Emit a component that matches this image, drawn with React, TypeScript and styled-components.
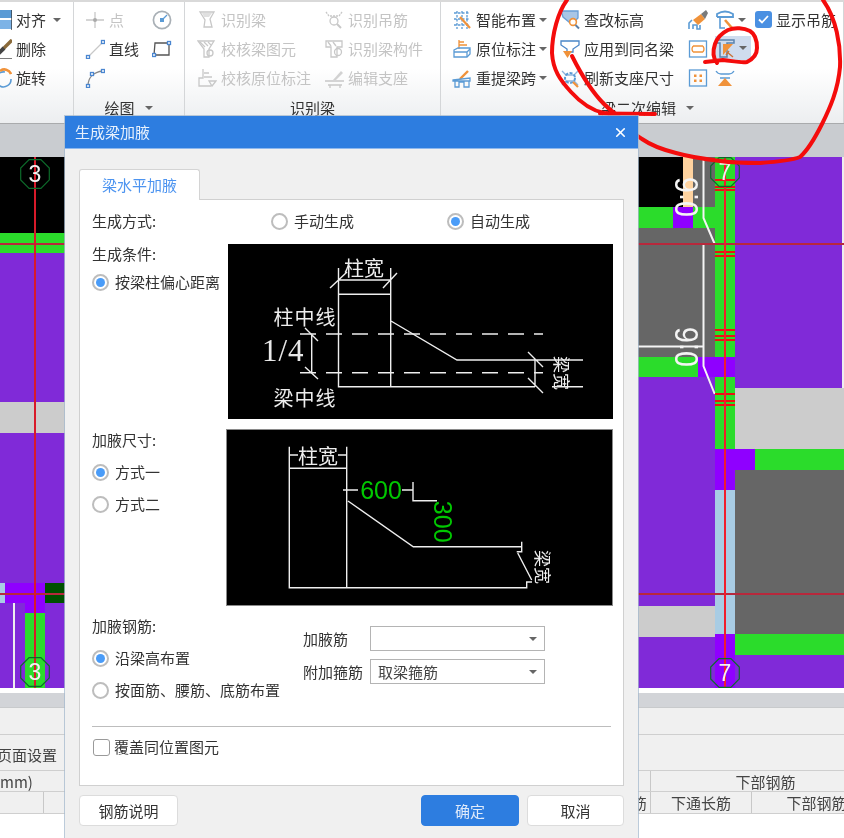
import React from "react";
import styled, { createGlobalStyle } from "styled-components";
import { X } from "lucide-react";

const BLUE = "#5b9bd5";
const ORANGE = "#f0923a";
const GRAY = "#c8c8c8";
const PURPLE = "#802ad8";
const BRIGHT = "#8f00ff";
const GREEN = "#2bdc2b";
const DARK = "#666666";
const LIGHT = "#cccccc";
const SKY = "#a8cce4";

const Global = createGlobalStyle`
  html, body { margin: 0; padding: 0; background: #fff; }
  #root { width: 844px; height: 838px; overflow: hidden; }
  * { box-sizing: border-box; }
`;

const Page = styled.div`
  position: relative;
  width: 844px;
  height: 838px;
  overflow: hidden;
  background: #fff;
  color: #333;
  font: 15px/22px "Noto Sans CJK SC", "Liberation Sans", sans-serif;
  filter: blur(0.35px);
`;

/* ---------- ribbon ---------- */
const Ribbon = styled.div`
  display: flex;
  height: 124px;
  border-top: 2px solid #d9d9d9;
  border-bottom: 1px solid #a9abad;
  background: linear-gradient(#ffffff 55%, #eceef0);
`;
const Group = styled.div<{ $w: number; $pl: number; $ml?: number }>`
  flex: none;
  width: ${(p) => p.$w}px;
  margin-left: ${(p) => p.$ml ?? 0}px;
  padding: 3px 0 0 ${(p) => p.$pl}px;
  border-right: 1px solid #d4d6d8;
  display: flex;
  flex-direction: column;
`;
const ToolGrid = styled.div<{ $cols: string }>`
  display: grid;
  grid-template-columns: ${(p) => p.$cols};
  grid-auto-rows: 29px;
  height: 87px;
`;
const Tool = styled.div<{ $off?: boolean; $hot?: boolean }>`
  display: flex;
  align-items: center;
  gap: 4px;
  white-space: nowrap;
  color: ${(p) => (p.$off ? "#c4c4c4" : "#333")};
  svg { flex: none; }
`;
const HotTool = styled.div`
  display: flex;
  align-items: center;
  gap: 3px;
  width: 36px;
  height: 24px;
  margin-top: 2px;
  background: #cfdcee;
`;
const Caret = styled.i<{ $gap?: number }>`
  flex: none;
  width: 0;
  height: 0;
  margin-left: ${(p) => p.$gap ?? 2}px;
  border: 4px solid transparent;
  border-top: 4px solid #666;
  border-bottom: 0;
`;
const GroupLabel = styled.div<{ $shift?: number }>`
  display: flex;
  justify-content: center;
  align-items: center;
  gap: 8px;
  height: 22px;
  margin-top: 5px;
  margin-left: ${(p) => p.$shift ?? 0}px;
  margin-right: 12px;
`;
const Check = styled.span`
  flex: none;
  width: 17px;
  height: 17px;
  border-radius: 3px;
  background: #4a90e2;
  display: flex;
  align-items: center;
  justify-content: center;
`;

/* ---------- canvas ---------- */
const GrayStrip = styled.div`
  height: 33px;
  background: #c9ccd0;
`;
const Canvas = styled.svg`
  display: block;
  width: 844px;
  height: 531px;
`;
const Annotation = styled.svg`
  position: absolute;
  left: 0;
  top: 0;
  width: 844px;
  height: 200px;
  pointer-events: none;
`;

/* ---------- bottom panels ---------- */
const BottomGap = styled.div`
  height: 5px;
  background: #fff;
`;
const BottomBar = styled.div`
  height: 15px;
  background: #d2d4d8;
  border-bottom: 1px solid #c8cacc;
`;
const BottomRow = styled.div<{ $h: number }>`
  height: ${(p) => p.$h}px;
  background: #f0f0f0;
  border-bottom: 1px solid #cfcfcf;
  display: flex;
  align-items: center;
  padding-top: 4px;
  color: #444;
`;
const PageSetup = styled.span`
  margin-left: -3px;
`;
const TableRow = styled.div<{ $cols: string; $h: number }>`
  display: grid;
  grid-template-columns: ${(p) => p.$cols};
  height: ${(p) => p.$h}px;
  background: #f0f0f0;
  border-bottom: 1px solid #cfcfcf;
  color: #444;
`;
const Cell = styled.div<{ $end?: boolean; $start?: boolean }>`
  border-right: 1px solid #c8c8c8;
  text-align: ${(p) => (p.$end ? "right" : p.$start ? "left" : "center")};
  line-height: 21px;
  white-space: nowrap;
  overflow: hidden;
`;

/* ---------- dialog ---------- */
const Dialog = styled.div`
  position: absolute;
  left: 65px;
  top: 116px;
  width: 573px;
  height: 722px;
  background: #f0f0f0;
  box-shadow: 0 0 0 1px rgba(165, 185, 205, 0.75);
`;
const TitleBar = styled.div`
  height: 33px;
  background: #2d7de0;
  color: #e8f1fc;
  display: flex;
  align-items: center;
  justify-content: space-between;
  padding: 0 10px;
  border-bottom: 1px solid #8db8ee;
`;
const Body = styled.div`
  padding: 20px 14px 0 14px;
`;
const Tab = styled.div`
  width: 121px;
  height: 31px;
  background: #fff;
  border: 1px solid #d4d4d4;
  border-bottom: 0;
  border-radius: 3px 3px 0 0;
  color: #4d94f0;
  text-align: center;
  line-height: 30px;
  margin-bottom: -1px;
  position: relative;
  z-index: 1;
`;
const Panel = styled.div`
  width: 545px;
  height: 587px;
  background: #fff;
  border: 1px solid #d0d0d0;
  padding: 9px 12px 0 12px;
`;
const MethodRow = styled.div`
  display: flex;
  align-items: center;
  height: 24px;
  margin-bottom: 11px;
`;
const MethodLabel = styled.span`
  flex: none;
  width: 179px;
`;
const MethodOption = styled.div`
  flex: none;
  width: 176px;
`;
const Section = styled.div<{ $left: number; $mb: number }>`
  display: grid;
  grid-template-columns: ${(p) => p.$left}px 1fr;
  margin-bottom: ${(p) => p.$mb}px;
`;
const SideColumn = styled.div<{ $top?: number }>`
  display: flex;
  flex-direction: column;
  align-items: flex-start;
  gap: ${(p) => p.$top ?? 10}px;
  margin-top: -1px;
`;
const RadioRow = styled.label`
  display: flex;
  align-items: center;
  gap: 6px;
  height: 22px;
  white-space: nowrap;
`;
const RadioDot = styled.span<{ $on?: boolean }>`
  flex: none;
  width: 17px;
  height: 17px;
  border-radius: 50%;
  border: 2px solid #bdbdbd;
  background: #fff;
  display: flex;
  align-items: center;
  justify-content: center;
  &::after {
    content: "";
    width: 9px;
    height: 9px;
    border-radius: 50%;
    background: ${(p) => (p.$on ? "#4a9cf8" : "transparent")};
  }
`;
const Diagram = styled.svg<{ $ml: number; $edge?: boolean }>`
  display: block;
  width: 385px;
  height: 175px;
  margin-left: ${(p) => p.$ml}px;
  background: #000;
  outline: ${(p) => (p.$edge ? "1px solid #8a8a8a" : "none")};
`;
const SteelFields = styled.div`
  display: grid;
  grid-template-columns: 67px 175px;
  grid-auto-rows: 25px;
  row-gap: 8px;
  align-items: center;
  padding-top: 10px;
`;
const Select = styled.div`
  height: 25px;
  border: 1px solid #b4b4b4;
  background: #fff;
  padding: 0 7px;
  line-height: 23px;
  display: flex;
  align-items: center;
  justify-content: space-between;
  color: #444;
`;
const Divider = styled.div`
  height: 1px;
  margin: 25px 0 9px 0;
  background: #bdbdbd;
`;
const CheckRow = styled.label`
  display: flex;
  align-items: center;
  gap: 4px;
  height: 22px;
  margin-left: 1px;
`;
const CheckBox = styled.span`
  width: 17px;
  height: 17px;
  border: 1px solid #9a9a9a;
  border-radius: 3px;
  background: #fff;
`;
const ButtonBar = styled.div`
  display: flex;
  gap: 8px;
  margin-top: 9px;
`;
const Button = styled.button<{ $w: number; $primary?: boolean; $push?: boolean }>`
  width: ${(p) => p.$w}px;
  height: 31px;
  padding: 0;
  margin-left: ${(p) => (p.$push ? "auto" : "0")};
  border-radius: 4px;
  border: 1px solid ${(p) => (p.$primary ? "#2d7de0" : "#dcdcdc")};
  background: ${(p) => (p.$primary ? "#2d7de0" : "#fff")};
  color: ${(p) => (p.$primary ? "#dfeafa" : "#333")};
  font: inherit;
`;

/* ---------- icons ---------- */
const Ico = ({ children, w = 20 }: { children: React.ReactNode; w?: number }) => (
  <svg width={w} height={20} viewBox={`0 0 ${w} 20`} fill="none" strokeWidth={1.3}>
    {children}
  </svg>
);
const Node = ({ x, y }: { x: number; y: number }) => (
  <rect x={x - 1.5} y={y - 1.5} width={3} height={3} fill="#fff" stroke="#4a86d0" />
);
const Funnel = ({ c = GRAY }: { c?: string }) => (
  <path d="M3 2H17L13 9L15 17H7L8 10Z" stroke={c} />
);
const icons: Record<string, React.ReactNode> = {
  align: (
    <>
      <rect x="7" y="0" width="13" height="8" fill="#5b9bd5" />
      <rect x="7" y="10" width="13" height="9" fill="#7db3e6" />
      <path d="M20 0V20" stroke="#333" />
    </>
  ),
  del: (
    <>
      <path d="M20 1L11 10" stroke="#8a6a3a" strokeWidth="3.4" />
      <path d="M12 9L6 15" stroke="#444" strokeWidth="4" />
      <path d="M7 20H20" stroke="#444" strokeWidth="1.4" />
    </>
  ),
  rotate: (
    <>
      <path d="M13 4A7.5 7.5 0 0 0 8 18A7.5 7.5 0 0 0 19 11" stroke={BLUE} strokeWidth="1.6" />
      <path d="M8 3A7 7 0 0 1 19 6" stroke={ORANGE} strokeWidth="2.6" />
    </>
  ),
  point: (
    <>
      <path d="M1 10H19M10 2V18" stroke={GRAY} />
      <circle cx="10" cy="10" r="2" fill="#aaa" />
    </>
  ),
  dial: (
    <>
      <circle cx="10" cy="10" r="8.6" stroke="#a9b0b6" strokeWidth="1.7" />
      <path d="M10 10L15 5" stroke={BLUE} />
      <rect x="8" y="8" width="4" height="4" fill={BLUE} />
    </>
  ),
  line: (
    <>
      <path d="M3 18L18 3" stroke={GRAY} />
      <Node x={3} y={18} />
      <Node x={18} y={3} />
    </>
  ),
  rect: (
    <>
      <path d="M3 4H17V16H2Z" stroke="#555" />
      <Node x={2} y={16} />
      <Node x={17} y={4} />
    </>
  ),
  arc: (
    <>
      <path d="M3 18C3 10 8 4 18 3" stroke="#888" />
      <Node x={3} y={18} />
      <Node x={7} y={6} />
      <Node x={18} y={3} />
    </>
  ),
  funnel: (
    <>
      <Funnel />
      <path d="M5 3H15L12 7H7Z" fill="#e0e0e0" />
    </>
  ),
  hatch: (
    <>
      <path d="M1 2H17L12 10V18H7V10Z" stroke={GRAY} />
      <path d="M3 3L8 8M7 3L11 7M11 3L14 6" stroke={GRAY} />
      <circle cx="13" cy="14" r="3" stroke={GRAY} />
    </>
  ),
  base: (
    <>
      <path d="M6 1V10H2V18H14" stroke={GRAY} />
      <path d="M7 5H12M7 9H15" stroke={GRAY} />
      <path d="M12 13H19L15 18Z" stroke={GRAY} />
    </>
  ),
  hook: (
    <>
      <path d="M2 2L5 6H15L18 2" stroke={GRAY} strokeDasharray="2 1" />
      <circle cx="10" cy="11" r="4" stroke={GRAY} />
      <path d="M13 14L17 18" stroke={GRAY} strokeWidth="2" />
    </>
  ),
  member: (
    <>
      <path d="M2 2H18V8H13V18H7V8H2Z" stroke={GRAY} />
      <path d="M4 3L7 7M9 3L12 7" stroke={GRAY} />
      <circle cx="14" cy="13" r="3.5" stroke={GRAY} />
    </>
  ),
  seat: (
    <>
      <path d="M9 12L17 3L19 5L12 12Z" fill="#d2d2d2" />
      <path d="M1 13H20M4 17H18M6 17V20M16 17V20" stroke={GRAY} />
    </>
  ),
  smart: (
    <>
      <path d="M2 3H18M2 9H18M2 15H18M5 1V19M10 1V19M15 1V19" stroke={BLUE} strokeDasharray="2.5 1.5" />
      <path d="M8 7L18 18" stroke={ORANGE} strokeWidth="2.2" />
    </>
  ),
  mark: (
    <>
      <path d="M7 1V10M7 3H12M7 6H15" stroke={ORANGE} />
      <path d="M2 11L6 9H18V15L15 18H2Z" stroke={BLUE} />
      <path d="M2 13H15V18M15 13L18 10" stroke={BLUE} />
    </>
  ),
  lift: (
    <>
      <path d="M8 11L16 3" stroke={ORANGE} strokeWidth="2.4" />
      <path d="M1 12L18 10V13H1ZM3 13V19H7V14H12V19H17V13" stroke={BLUE} />
    </>
  ),
  query: (
    <>
      <path d="M1 1H18V8L14 12H9L3 7Z" fill="#a9c6e6" stroke="#6a9ed6" />
      <circle cx="13" cy="12" r="3.4" stroke={ORANGE} strokeWidth="1.6" fill="#fff" />
      <path d="M15.500 15L19 18.500" stroke="#5b7fa8" strokeWidth="2" />
    </>
  ),
  apply: (
    <>
      <path d="M1 2H19V6L13 10V13H7V10L1 6Z" stroke="#4a86c8" />
      <path d="M3 12H12L7.500 19Z" fill={ORANGE} />
    </>
  ),
  refresh: (
    <>
      <path d="M2 3L6 7H14L18 3M2 17L6 13H14L18 17" stroke="#8fb4dc" />
      <circle cx="10" cy="10" r="5" stroke={BLUE} strokeDasharray="3 1.500" strokeWidth="2" />
      <path d="M13 14L18 19" stroke={ORANGE} strokeWidth="2.2" />
    </>
  ),
  paint: (
    <>
      <path d="M1 19V13L4 10M12 15V19H9V15H5V19" stroke={BLUE} strokeWidth="1.6" />
      <path d="M5 10L13 4L17 9L10 15Z" fill={ORANGE} />
      <path d="M13 4L18 0L20 3L17 9Z" fill="#7a7a7a" />
    </>
  ),
  hanger: (
    <>
      <path d="M2 7V4Q10 -1 18 4V7H2" stroke={BLUE} strokeWidth="1.8" />
      <path d="M5 7V18H10" stroke={BLUE} strokeWidth="1.6" />
      <path d="M10 10L17 18" stroke={ORANGE} strokeWidth="2.6" />
    </>
  ),
  bracket: (
    <>
      <rect x="1.500" y="2" width="17" height="16" stroke={BLUE} />
      <path d="M5 7H15M5 13H15M5 7Q3 10 5 13M15 7Q17 10 15 13" stroke={ORANGE} />
    </>
  ),
  haunch: (
    <>
      <path d="M1 2H19V5H12V19H5V5H1Z" stroke="#5b83ad" strokeWidth="1.500" />
      <path d="M8 6H18L8 17Z" fill={ORANGE} />
      <path d="M12 14L18 19M11 17L14 13" stroke="#c9743a" strokeWidth="1.400" />
    </>
  ),
  dots: (
    <>
      <rect x="1.500" y="2" width="17" height="16" stroke={BLUE} />
      <path d="M6 6.500H8.500V9H6ZM11.500 6.500H14V9H11.500ZM6 11.500H8.500V14H6ZM11.500 11.500H14V14H11.500Z" fill={ORANGE} />
    </>
  ),
  tri: (
    <>
      <path d="M1 3Q3 6 6 6H14Q17 6 19 3M5 10H15" stroke={BLUE} />
      <path d="M10 10L17 18H3Z" fill={ORANGE} />
    </>
  ),
};
const Icon = ({ n }: { n: string }) => <Ico>{icons[n]}</Ico>;

const ToolItem = ({ n, t, off, caret }: { n: string; t?: string; off?: boolean; caret?: boolean }) => (
  <Tool $off={off}>
    <Icon n={n} />
    {t}
    {caret && <Caret $gap={-1} />}
  </Tool>
);

/* ---------- canvas data ---------- */
type R = [number, number, number, number, string];
const rects: R[] = [
  [0, 0, 65, 76, "#000"],
  [0, 76, 65, 20, GREEN],
  [0, 96, 65, 149, PURPLE],
  [0, 245, 65, 31, LIGHT],
  [0, 276, 65, 150, PURPLE],
  [5, 426, 40, 20, BRIGHT],
  [0, 426, 5, 20, SKY],
  [45, 426, 20, 20, "#005000"],
  [0, 446, 65, 85, PURPLE],
  [25, 446, 20, 10, BRIGHT],
  [25, 456, 20, 75, GREEN],
  [13, 446, 2, 85, "#eee"],
  [638, 0, 45, 50, "#000"],
  [683, 0, 10, 50, "#ffd39f"],
  [693, 0, 22, 50, DARK],
  [715, 0, 20, 292, GREEN],
  [735, 0, 107, 231, PURPLE],
  [842, 0, 2, 231, "#eee"],
  [735, 231, 109, 61, LIGHT],
  [638, 50, 35, 21, GREEN],
  [673, 50, 20, 21, BRIGHT],
  [693, 50, 22, 21, GREEN],
  [638, 71, 77, 129, DARK],
  [638, 200, 60, 20, GREEN],
  [698, 200, 37, 20, BRIGHT],
  [638, 220, 77, 229, PURPLE],
  [638, 449, 77, 31, LIGHT],
  [638, 480, 77, 51, PURPLE],
  [715, 292, 40, 41, BRIGHT],
  [715, 333, 20, 144, SKY],
  [715, 477, 20, 54, BRIGHT],
  [755, 292, 89, 21, GREEN],
  [735, 313, 109, 164, DARK],
  [735, 477, 109, 21, GREEN],
  [735, 498, 109, 33, PURPLE],
];
const hashY = [23, 30, 33, 87, 95, 99, 173, 179, 183, 237, 244, 248];

const Octagon = ({ cx, cy, t }: { cx: number; cy: number; t: string }) => {
  const pts = Array.from({ length: 8 }, (_, i) => {
    const a = ((i + 0.5) * Math.PI) / 4;
    return `${(cx + 15.5 * Math.cos(a)).toFixed(1)},${(cy + 15.5 * Math.sin(a)).toFixed(1)}`;
  }).join(" ");
  return (
    <>
      <polygon points={pts} fill="none" stroke="#0d6a2a" strokeWidth="1.2" />
      <text x={cx} y={cy + 8} fill="#f2f2f2" fontSize="23" textAnchor="middle" fontFamily="Liberation Sans, sans-serif">
        {t}
      </text>
    </>
  );
};

const RotNum = ({ y }: { y: number }) => (
  <text
    transform={`translate(698 ${y}) rotate(-90)`}
    fill="#f4f4f4"
    fontSize="33"
    fontFamily="Liberation Sans, sans-serif"
    textLength={40}
    lengthAdjust="spacingAndGlyphs"
  >
    0:6
  </text>
);

const CjkSvg = styled.text`
  font-family: "Noto Sans CJK SC", sans-serif;
`;

const D_TEXT = ({ x, y, t, s = 20, rot, fill = "#eee", ls = 0 }: { x: number; y: number; t: string; s?: number; rot?: number; fill?: string; ls?: number }) => (
  <CjkSvg
    transform={`translate(${x} ${y})${rot ? ` rotate(${rot})` : ""}`}
    fill={fill}
    fontSize={s}
    letterSpacing={ls}
    textAnchor="middle"
    dominantBaseline="central"
  >
    {t}
  </CjkSvg>
);

export default function App() {
  return (
    <Page>
      <Global />
      <Ribbon>
        <Group $w={82} $pl={0} $ml={-8}>
          <ToolGrid $cols="1fr">
            <Tool>
              <Icon n="align" />
              对齐
              <Caret $gap={3} />
            </Tool>
            <ToolItem n="del" t="删除" />
            <ToolItem n="rotate" t="旋转" />
          </ToolGrid>
        </Group>
        <Group $w={111} $pl={11}>
          <ToolGrid $cols="67px 24px">
            <ToolItem n="point" t="点" off />
            <ToolItem n="dial" />
            <ToolItem n="line" t="直线" />
            <ToolItem n="rect" />
            <ToolItem n="arc" />
          </ToolGrid>
          <GroupLabel>
            绘图
            <Caret />
          </GroupLabel>
        </Group>
        <Group $w={256} $pl={12}>
          <ToolGrid $cols="127px 1fr">
            <ToolItem n="funnel" t="识别梁" off />
            <ToolItem n="hook" t="识别吊筋" off />
            <ToolItem n="hatch" t="校核梁图元" off />
            <ToolItem n="member" t="识别梁构件" off />
            <ToolItem n="base" t="校核原位标注" off />
            <ToolItem n="seat" t="编辑支座" off />
          </ToolGrid>
          <GroupLabel>识别梁</GroupLabel>
        </Group>
        <Group $w={403} $pl={11}>
          <ToolGrid $cols="108px 128px 27px 40px 1fr">
            <ToolItem n="smart" t="智能布置" caret />
            <ToolItem n="query" t="查改标高" />
            <ToolItem n="paint" />
            <Tool>
              <Icon n="hanger" />
              <Caret $gap={-1} />
            </Tool>
            <Tool>
              <Check>
                <svg width="11" height="9" viewBox="0 0 11 9" fill="none">
                  <path d="M1 4.500L4 7.500L10 1" stroke="#fff" strokeWidth="1.8" />
                </svg>
              </Check>
              显示吊筋
            </Tool>
            <ToolItem n="mark" t="原位标注" caret />
            <ToolItem n="apply" t="应用到同名梁" />
            <ToolItem n="bracket" />
            <HotTool>
              <Icon n="haunch" />
              <Caret $gap={1} />
            </HotTool>
            <span />
            <ToolItem n="lift" t="重提梁跨" caret />
            <ToolItem n="refresh" t="刷新支座尺寸" />
            <ToolItem n="dots" />
            <ToolItem n="tri" />
          </ToolGrid>
          <GroupLabel $shift={12}>
            梁二次编辑
            <Caret />
          </GroupLabel>
        </Group>
      </Ribbon>
      <GrayStrip />
      <Canvas viewBox="0 0 844 531">
        {rects.map(([x, y, w, h, c], i) => (
          <rect key={i} x={x} y={y} width={w} height={h} fill={c} />
        ))}
        <path d="M703.500 0V61L714.700 87M703.500 86V209L714.700 237M638 189.500H703.500" stroke="#f4f4f4" strokeWidth="2" fill="none" />
        {hashY.map((y) => (
          <rect key={y} x={715} y={y - 1} width={20} height={2} fill="#ee1111" />
        ))}
        <rect x="0" y="86" width="844" height="2" fill="#b8283c" />
        <rect x="0" y="436" width="844" height="2" fill="#b8283c" />
        <rect x="34" y="0" width="2" height="531" fill="#d81a2a" />
        <rect x="724" y="0" width="2" height="531" fill="#f01c2c" />
        <RotNum y={60} />
        <RotNum y={210} />
        <Octagon cx={35} cy={17} t="3" />
        <Octagon cx={35} cy={515} t="3" />
        <Octagon cx={725} cy={15} t="7" />
        <Octagon cx={725} cy={516} t="7" />
      </Canvas>
      <BottomGap />
      <BottomBar />
      <BottomRow $h={27} />
      <BottomRow $h={36}>
        <PageSetup>页面设置</PageSetup>
      </BottomRow>
      <TableRow $cols="651px 230px" $h={21}>
        <Cell $start>mm)</Cell>
        <Cell>下部钢筋</Cell>
      </TableRow>
      <TableRow $cols="44px 607px 101px 130px" $h={22}>
        <Cell />
        <Cell $end>箍筋&nbsp;</Cell>
        <Cell>下通长筋</Cell>
        <Cell>下部钢筋</Cell>
      </TableRow>

      <Annotation viewBox="0 0 844 200" fill="none" stroke="#f40c0c" strokeWidth="4" strokeLinecap="round" strokeLinejoin="round">
        <path d="M567 0C558 12 552 34 552 53C553 70 560 80 571 92C580 102 590 110 604 113L617 115C624 122 632 133 642 139C652 146 664 150 676 153C690 157 704 159 720 161C735 163 747 163 760 163C775 162 790 161 800 157C808 150 815 138 822 124C830 108 838 90 840 67C841 45 836 18 823 0" />
        <path d="M572 56C580 72 592 92 604 104C610 110 614 113 617 115" />
        <path d="M600 113.500L655 114" />
        <path d="M705 62L723 60C733 61 741 63 747 62C753 59 757 54 757 48C757 40 755 34 750 31C744 28 735 27 728 30C722 33 717 38 715 44C713 50 712 57 717 63" />
      </Annotation>

      <Dialog>
        <TitleBar>
          <span>生成梁加腋</span>
          <X size={15} strokeWidth={2.6} color="#fff" />
        </TitleBar>
        <Body>
          <Tab>梁水平加腋</Tab>
          <Panel>
            <MethodRow>
              <MethodLabel>生成方式:</MethodLabel>
              <MethodOption>
                <RadioRow>
                  <RadioDot />
                  手动生成
                </RadioRow>
              </MethodOption>
              <MethodOption>
                <RadioRow>
                  <RadioDot $on />
                  自动生成
                </RadioRow>
              </MethodOption>
            </MethodRow>

            <Section $left={136} $mb={11}>
              <SideColumn $top={6}>
                <span>生成条件:</span>
                <RadioRow>
                  <RadioDot $on />
                  按梁柱偏心距离
                </RadioRow>
              </SideColumn>
              <Diagram $ml={0} viewBox="228 244 385 175">
                <path
                  d="M338.500 268V386.700H535M390.700 268V386.700M338.500 294.300H390.700M338.500 280H390.700M330 288L347 272M383 288L397 273M311.700 334V372.700M305 328L318 341M305 367L318 379M391 321L457 360H583M535 360V386.700M528 352L543 367M528 378L543 393M552 386.700H583"
                  stroke="#eee"
                  strokeWidth="1.4"
                  fill="none"
                />
                <path d="M300 334H543M300 372.700H543" stroke="#eee" strokeWidth="1.4" strokeDasharray="16 10" />
                <D_TEXT x={364} y={267} t="柱宽" s={20} />
                <D_TEXT x={305} y={316} t="柱中线" s={20} ls={1} />
                <D_TEXT x={305} y={397} t="梁中线" s={20} ls={1} />
                <text x={262} y={361} fill="#e8e8e8" fontSize="31" fontFamily="Liberation Serif, serif" letterSpacing="1">
                  1/4
                </text>
                <D_TEXT x={562} y={373} t="梁宽" s={17} rot={90} />
              </Diagram>
            </Section>

            <Section $left={135} $mb={11}>
              <SideColumn>
                <span>加腋尺寸:</span>
                <RadioRow>
                  <RadioDot $on />
                  方式一
                </RadioRow>
                <RadioRow>
                  <RadioDot />
                  方式二
                </RadioRow>
              </SideColumn>
              <Diagram $ml={0} $edge viewBox="227 430 385 175">
                <path
                  d="M289.300 446.700V587.700H526.700V582H532M346.700 446.700V587.700M289.300 468.300H346.700M289.300 455H298M338 455H346.700M343 490H358M402 490H413M413 482V500.700H437M348 501L413.300 546.700H521.700M521.700 541.700V551.700H516.700M517.700 553L531.700 580"
                  stroke="#eee"
                  strokeWidth="1.4"
                  fill="none"
                />
                <D_TEXT x={318} y={455} t="柱宽" s={20} />
                <text x={381} y={499} fill="#00c800" fontSize="25" textAnchor="middle" fontFamily="Liberation Sans, sans-serif">
                  600
                </text>
                <text
                  transform="translate(434 521.700) rotate(90)"
                  fill="#00c800"
                  fontSize="25"
                  textAnchor="middle"
                  fontFamily="Liberation Sans, sans-serif"
                >
                  300
                </text>
                <D_TEXT x={543} y={567} t="梁宽" s={17} rot={90} />
              </Diagram>
            </Section>

            <Section $left={211} $mb={0}>
              <SideColumn>
                <span>加腋钢筋:</span>
                <RadioRow>
                  <RadioDot $on />
                  沿梁高布置
                </RadioRow>
                <RadioRow>
                  <RadioDot />
                  按面筋、腰筋、底筋布置
                </RadioRow>
              </SideColumn>
              <SteelFields>
                <span>加腋筋</span>
                <Select>
                  <span />
                  <Caret />
                </Select>
                <span>附加箍筋</span>
                <Select>
                  <span>取梁箍筋</span>
                  <Caret />
                </Select>
              </SteelFields>
            </Section>

            <Divider />
            <CheckRow>
              <CheckBox />
              覆盖同位置图元
            </CheckRow>
          </Panel>
          <ButtonBar>
            <Button $w={99}>钢筋说明</Button>
            <Button $w={98} $primary $push>
              确定
            </Button>
            <Button $w={97}>取消</Button>
          </ButtonBar>
        </Body>
      </Dialog>
    </Page>
  );
}
